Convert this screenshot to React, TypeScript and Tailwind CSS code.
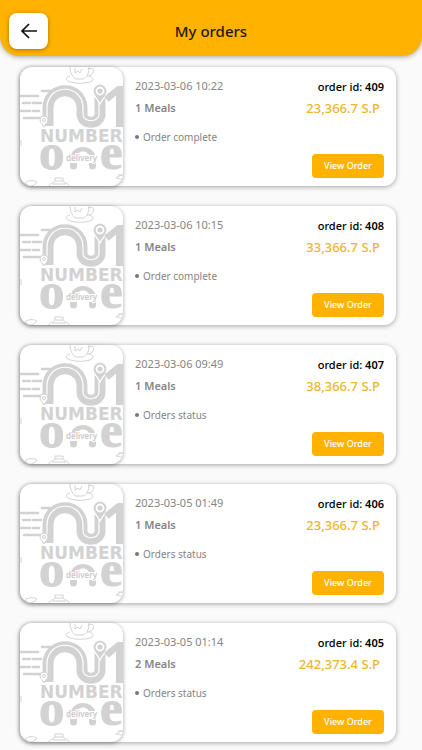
interface Order {
  id: number;
  date: string;
  meals: number;
  price: string;
  status: string;
}

const orders: Order[] = [
  { id: 409, date: "2023-03-06 10:22", meals: 1, price: "23,366.7", status: "Order complete" },
  { id: 408, date: "2023-03-06 10:15", meals: 1, price: "33,366.7", status: "Order complete" },
  { id: 407, date: "2023-03-06 09:49", meals: 1, price: "38,366.7", status: "Orders status" },
  { id: 406, date: "2023-03-05 01:49", meals: 1, price: "23,366.7", status: "Orders status" },
  { id: 405, date: "2023-03-05 01:14", meals: 2, price: "242,373.4", status: "Orders status" },
];

function BackIcon() {
  return (
    <svg viewBox="0 0 18 18" className="h-[18px] w-[18px]" fill="none" stroke="#111" strokeWidth="1.7" aria-hidden="true">
      <path d="M17 9H2M9 2 2 9l7 7" />
    </svg>
  );
}

function PlaceholderLogo() {
  return (
    <svg viewBox="0 0 103 119" className="h-full w-full" fill="none" stroke="#d2d2d2" aria-hidden="true">
      {/* cup */}
      <g strokeWidth="1">
        <path d="M50 0c0 6 3 11 6 12h7c4-1 6-6 6-12M68 2c5-2 7 1 5 4-1 2-3 3-6 3" />
        <path d="M50 9c-4 1-5 3-2 5 6 3 19 3 24 0 2-2 1-4-3-5" />
        <path d="M55 1v5l3-2 2 2 2-4" />
      </g>

      {/* speed lines */}
      <path d="M0 29h18M3 36h7M13 36h8M0 44h10M13 44h6M4 51h17M22 24h8" strokeWidth="2.6" strokeLinecap="round" />

      {/* road */}
      <path d="M28 59V41c0-23 34-23 34 0v6c0 11 18 11 18 0V27" strokeWidth="11" />
      <path d="M27 55V41c0-25 36-25 36 0v6c0 9 16 9 16 0V30" stroke="#fff" strokeWidth="1.2" />
      <path d="M80 37c-2-5-7-8-7-13a7 7 0 0 1 14 0c0 5-5 8-7 13Z" fill="#d2d2d2" stroke="#fff" strokeWidth="1.2" />
      <circle cx="80" cy="24" r="3.5" fill="#d2d2d2" stroke="#fff" strokeWidth="1.8" />
      <path d="M24 60c-1-3-4-4-4-7a4 4 0 0 1 8 0c0 3-3 4-4 7Z" fill="#fff" />
      <circle cx="24" cy="53" r="1.5" />

      <g fill="#d2d2d2" stroke="none">
        <text x="81" y="60" fontSize="57" fontWeight="700" fontFamily="'Noto Sans', sans-serif">1</text>
        <text x="20" y="75" fontSize="17" fontWeight="700" fontFamily="'DejaVu Sans', sans-serif">NUMBER</text>
        <g fontSize="51" fontWeight="700" stroke="#d2d2d2" strokeWidth="1" fontFamily="'Liberation Serif', serif">
          <text x="19" y="102">o</text>
          <text x="80" y="102">e</text>
        </g>
      </g>

      {/* arch between the letters */}
      <path d="M50 92c1-16 25-16 26 0h-6c0-10-14-10-14 0Z" fill="#d2d2d2" stroke="none" />
      <path d="M50 96h7v3a3.5 3.5 0 0 1-7 0ZM69 96h7v3a3.5 3.5 0 0 1-7 0Z" fill="#d2d2d2" stroke="none" />
      <text x="46" y="94" fontSize="8" fontWeight="600" fontFamily="'Noto Sans', sans-serif" fill="#c9c9c9" stroke="#fff" strokeWidth="2" paintOrder="stroke">
        delivery
      </text>

      {/* bottle and leaves */}
      <g strokeWidth="1">
        <path d="M35 111h8v3h-8zM35 114c-1 2-6 2-6 5M43 114c1 2 6 2 6 5M32 117h14" />
        <path d="M5 116c3-3 9-3 12-1-2 3-5 4-7 4M5 116l4 3M103 108c-3 0-5 2-7 3 3 0 5 1 7 2M98 108h5M1 73v6" />
      </g>
    </svg>
  );
}

function OrderCard({ order }: { order: Order }) {
  return (
    <li className="flex h-[119px] rounded-xl bg-white shadow-[0_1px_5px_rgba(0,0,0,0.35)]">
      <div className="w-[103px] shrink-0 overflow-hidden rounded-xl bg-white shadow-[0_1px_4px_rgba(0,0,0,0.35)]">
        <PlaceholderLogo />
      </div>

      <div className="flex flex-1 justify-between px-3">
        <div className="pt-[11px] text-[#858585]">
          <p className="text-[11px] leading-4">{order.date}</p>
          <p className="mt-1.5 text-[11px] leading-4 font-semibold">{order.meals} Meals</p>
          <p className="mt-[13px] flex items-center gap-1 text-[10px] leading-4">
            <span className="h-1 w-1 rounded-full bg-[#777]" />
            {order.status}
          </p>
        </div>

        <div className="flex flex-col items-end pt-3 pb-2">
          <p className="text-[11px] leading-4 font-medium text-black">
            order id: <span className="font-semibold">{order.id}</span>
          </p>
          <p className="mt-[5px] pr-1 text-[13px] leading-4 font-medium text-[#edb52c]">{order.price} S.P</p>
          <button type="button" className="mt-auto h-6 w-[72px] rounded bg-[#ffb300] text-[9px] font-medium text-white">
            View Order
          </button>
        </div>
      </div>
    </li>
  );
}

export default function App() {
  return (
    <div className="min-h-screen bg-[#fafafa] font-['Noto_Sans',sans-serif]">
      <header className="grid h-14 grid-cols-[1fr_auto_1fr] items-center rounded-b-[20px] bg-[#ffb300] px-[9px] pt-1.5 shadow-[0_1px_5px_rgba(0,0,0,0.35)]">
        <button
          type="button"
          aria-label="Back"
          className="flex h-9 w-[39px] items-center justify-center rounded-lg bg-white shadow-[0_1px_4px_rgba(0,0,0,0.35)]"
        >
          <BackIcon />
        </button>
        <h1 className="text-[15px] leading-5 font-medium text-[#211a08]">My orders</h1>
      </header>

      <ul className="mt-[11px] flex flex-col gap-5 pr-[26px] pl-5">
        {orders.map((order) => (
          <OrderCard key={order.id} order={order} />
        ))}
      </ul>
    </div>
  );
}
